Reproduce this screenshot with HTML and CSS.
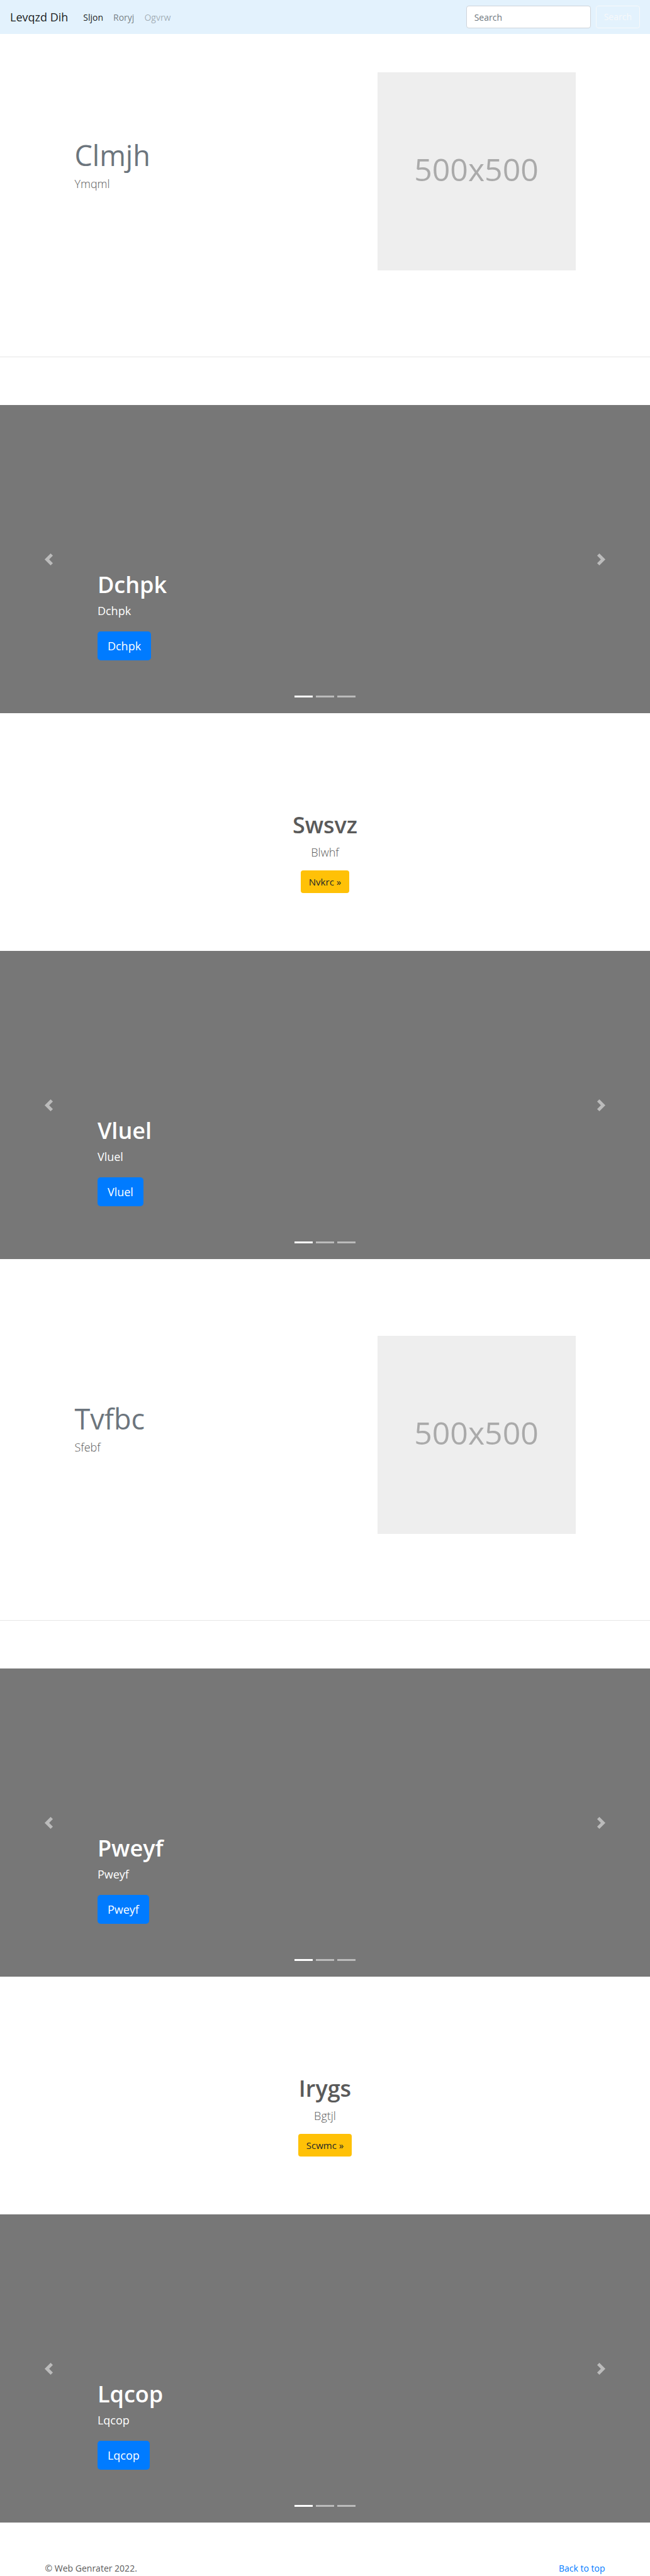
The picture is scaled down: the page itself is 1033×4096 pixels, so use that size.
FILE: index.html
```html
<!DOCTYPE html>
<html lang="en">
<head>
<meta charset="utf-8">
<meta name="viewport" content="width=device-width, initial-scale=1">
<title>Levqzd Dih</title>
<link rel="stylesheet" href="styles.css">
</head>
<body>
<header class="navbar" id="top">
  <a class="brand" href="#">Levqzd Dih</a>
  <nav class="nav">
    <a class="nav-link active" href="#">Sljon</a>
    <a class="nav-link" href="#">Roryj</a>
    <a class="nav-link disabled" href="#" aria-disabled="true">Ogvrw</a>
  </nav>
  <form class="search">
    <input class="search-input" type="search" placeholder="Search" aria-label="Search">
    <button class="btn btn-outline" type="submit">Search</button>
  </form>
</header>
<main>
  <section class="container featurette">
    <div class="featurette-text">
      <h2 class="featurette-heading">Clmjh</h2>
      <p class="lead">Ymqml</p>
    </div>
    <div class="placeholder">500x500</div>
  </section>
  <hr class="divider">

  <section class="carousel">
    <div class="caption">
      <h1 class="title">Dchpk</h1>
      <p class="caption-text">Dchpk</p>
      <a class="btn btn-primary" href="#">Dchpk</a>
    </div>
    <button class="control prev" type="button" aria-label="Previous"><svg class="arrow" viewBox="0 0 8 8"><path d="M5.25 0l-4 4 4 4 1.5-1.5L4.25 4l2.5-2.5L5.25 0z"/></svg></button>
    <button class="control next" type="button" aria-label="Next"><svg class="arrow" viewBox="0 0 8 8"><path d="M2.75 0l-1.5 1.5L3.75 4l-2.5 2.5L2.75 8l4-4-4-4z"/></svg></button>
    <div class="indicators"><span class="dot current"></span><span class="dot"></span><span class="dot"></span></div>
  </section>

  <section class="container marketing">
    <h2 class="title">Swsvz</h2>
    <p class="lead">Blwhf</p>
    <a class="btn btn-warning" href="#">Nvkrc »</a>
  </section>

  <section class="carousel">
    <div class="caption">
      <h1 class="title">Vluel</h1>
      <p class="caption-text">Vluel</p>
      <a class="btn btn-primary" href="#">Vluel</a>
    </div>
    <button class="control prev" type="button" aria-label="Previous"><svg class="arrow" viewBox="0 0 8 8"><path d="M5.25 0l-4 4 4 4 1.5-1.5L4.25 4l2.5-2.5L5.25 0z"/></svg></button>
    <button class="control next" type="button" aria-label="Next"><svg class="arrow" viewBox="0 0 8 8"><path d="M2.75 0l-1.5 1.5L3.75 4l-2.5 2.5L2.75 8l4-4-4-4z"/></svg></button>
    <div class="indicators"><span class="dot current"></span><span class="dot"></span><span class="dot"></span></div>
  </section>

  <section class="container featurette spaced">
    <div class="featurette-text">
      <h2 class="featurette-heading">Tvfbc</h2>
      <p class="lead">Sfebf</p>
    </div>
    <div class="placeholder">500x500</div>
  </section>
  <hr class="divider">

  <section class="carousel">
    <div class="caption">
      <h1 class="title">Pweyf</h1>
      <p class="caption-text">Pweyf</p>
      <a class="btn btn-primary" href="#">Pweyf</a>
    </div>
    <button class="control prev" type="button" aria-label="Previous"><svg class="arrow" viewBox="0 0 8 8"><path d="M5.25 0l-4 4 4 4 1.5-1.5L4.25 4l2.5-2.5L5.25 0z"/></svg></button>
    <button class="control next" type="button" aria-label="Next"><svg class="arrow" viewBox="0 0 8 8"><path d="M2.75 0l-1.5 1.5L3.75 4l-2.5 2.5L2.75 8l4-4-4-4z"/></svg></button>
    <div class="indicators"><span class="dot current"></span><span class="dot"></span><span class="dot"></span></div>
  </section>

  <section class="container marketing">
    <h2 class="title">Irygs</h2>
    <p class="lead">Bgtjl</p>
    <a class="btn btn-warning" href="#">Scwmc »</a>
  </section>

  <section class="carousel">
    <div class="caption">
      <h1 class="title">Lqcop</h1>
      <p class="caption-text">Lqcop</p>
      <a class="btn btn-primary" href="#">Lqcop</a>
    </div>
    <button class="control prev" type="button" aria-label="Previous"><svg class="arrow" viewBox="0 0 8 8"><path d="M5.25 0l-4 4 4 4 1.5-1.5L4.25 4l2.5-2.5L5.25 0z"/></svg></button>
    <button class="control next" type="button" aria-label="Next"><svg class="arrow" viewBox="0 0 8 8"><path d="M2.75 0l-1.5 1.5L3.75 4l-2.5 2.5L2.75 8l4-4-4-4z"/></svg></button>
    <div class="indicators"><span class="dot current"></span><span class="dot"></span><span class="dot"></span></div>
  </section>
</main>
<footer class="container footer">
  <p class="copyright">© Web Genrater 2022.</p>
  <a class="top-link" href="#top">Back to top</a>
</footer>
</body>
</html>
```

FILE: styles.css
```css
* { box-sizing: border-box; }

body {
  margin: 0;
  background: #fff;
  color: #5a5a5a;
  font-family: "Open Sans", "Noto Sans", sans-serif;
  font-size: 15px;
  line-height: 23px;
}

h1, h2, p { margin: 0; }
a { text-decoration: none; }

.container {
  width: 100%;
  max-width: 918px;
  margin: 0 auto;
  padding: 0 14px;
}

/* Navigation bar */
.navbar {
  display: flex;
  align-items: center;
  padding: 9px 16px;
  background: #e3f2fd;
}
.brand {
  margin-right: 16px;
  color: rgba(0, 0, 0, .9);
  font-size: 18px;
}
.nav { display: flex; flex: 1; }
.nav-link {
  padding: 0 8px;
  color: rgba(0, 0, 0, .5);
  font-size: 14px;
}
.nav-link.active { color: rgba(0, 0, 0, .9); }
.nav-link.disabled { color: rgba(0, 0, 0, .3); }
.search { display: flex; gap: 8px; }
.search-input {
  width: 198px;
  height: 36px;
  padding: 0 12px;
  border: 1px solid #ced4da;
  border-radius: 4px;
  background: #fff;
  color: #495057;
  font: inherit;
  font-size: 14px;
}
.search-input::placeholder { color: #6c757d; opacity: 1; }

/* Buttons */
.btn {
  display: inline-block;
  padding: 6px 13px;
  border: 0;
  border-radius: 4px;
  font: inherit;
  font-size: 15px;
  line-height: 24px;
}
.btn-outline {
  padding: 5px 12px;
  border: 1px solid #f8f9fa;
  background: transparent;
  color: #f8f9fa;
  font-size: 14px;
}
.btn-primary {
  padding: 8px 16px;
  border-radius: 5px;
  background: #007bff;
  color: #fff;
  font-size: 18px;
  line-height: 30px;
}
.btn-warning { background: #ffc107; color: #212529; }

/* Shared text */
.title {
  font-size: 36px;
  font-weight: 600;
  line-height: 46px;
}
.lead {
  font-size: 18px;
  font-weight: 300;
  line-height: 29px;
}

/* Featurettes */
.featurette {
  display: flex;
  flex-wrap: wrap;
  justify-content: space-between;
  padding: 61px 61px 137px;
}
.featurette.spaced { padding-top: 122px; }
.featurette-text { padding-top: 108px; }
.featurette-heading {
  margin-bottom: 7px;
  color: #6c757d;
  font-size: 45px;
  font-weight: 400;
  line-height: 48px;
}
.placeholder {
  display: flex;
  align-items: center;
  justify-content: center;
  width: 315px;
  max-width: 100%;
  aspect-ratio: 1;
  padding-bottom: 6px;
  background: #eee;
  color: #aaa;
  font-size: 50px;
}
.divider {
  margin: 0 0 76px;
  border: 0;
  border-top: 1px solid #e6e6e6;
}

/* Carousels */
.carousel {
  position: relative;
  display: flex;
  align-items: flex-end;
  min-height: 490px;
  padding: 0 15% 84px;
  background: #777;
  color: #fff;
}
.carousel .title { margin-bottom: 4px; }
.caption-text {
  margin-bottom: 18px;
  font-size: 18px;
  line-height: 29px;
}
.control {
  position: absolute;
  top: 0;
  bottom: 0;
  display: flex;
  align-items: center;
  justify-content: center;
  width: 15%;
  padding: 0;
  border: 0;
  background: none;
  opacity: .5;
}
.prev { left: 0; }
.next { right: 0; }
.arrow { width: 19px; height: 19px; fill: #fff; }
.indicators {
  position: absolute;
  right: 0;
  bottom: 25px;
  left: 0;
  display: flex;
  justify-content: center;
  gap: 5px;
}
.dot {
  width: 29px;
  height: 3px;
  background: #fff;
  opacity: .5;
}
.dot.current { opacity: 1; }

/* Centred call to action */
.marketing {
  padding-top: 155px;
  padding-bottom: 92px;
  text-align: center;
}
.marketing .title { margin-bottom: 6px; }
.marketing .lead { margin-bottom: 14px; }
.marketing .btn { display: block; width: fit-content; margin: 0 auto; }

/* Footer */
.footer {
  display: flex;
  justify-content: space-between;
  padding-top: 61px;
  font-size: 14px;
}
.top-link { color: #007bff; }

@media (max-width: 700px) {
  .navbar { flex-wrap: wrap; gap: 8px; }
  .featurette { gap: 48px; }
}
```
